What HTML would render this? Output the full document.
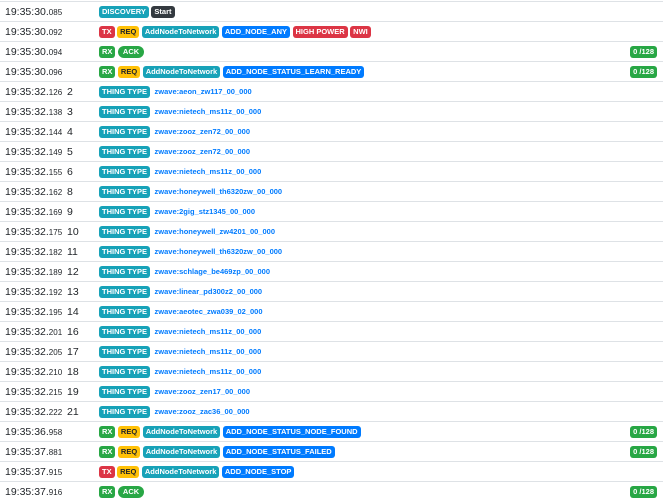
<!DOCTYPE html>
<html><head><meta charset="utf-8"><style>
body{margin:0;background:#fff;font-family:"Liberation Sans",sans-serif;color:#212529}
.row{height:19px;border-top:1px solid #dee2e6;width:663px;position:relative}
.row:first-child{margin-top:1px}
.t{position:absolute;left:5px;top:4px;font-size:10.5px;line-height:13px}
.t small{font-size:8px}
.n{position:absolute;left:67px;top:4px;font-size:10.5px;line-height:13px}
.m{position:absolute;left:99px;top:4px;display:flex;align-items:center;line-height:12px}
.b{display:inline-block;font-size:7.5px;font-weight:bold;color:#fff;padding:0 3px;border-radius:3px;line-height:12px;height:12px;margin-right:2.5px}
.g{background:#28a745}.y{background:#ffc107;color:#212529}.c{background:#17a2b8}.p{background:#007bff}.r{background:#dc3545}.d{background:#343a40}
.pill{border-radius:6px;padding:0 5px}
a{color:#007bff;font-size:7.5px;font-weight:bold;text-decoration:none;margin-left:2px}
.e{position:absolute;right:6px;top:4px;display:flex;line-height:12px}
.e .b{margin:0}
</style></head><body>
<div class="row"><span class="t">19:35:30.<small>085</small></span><span class="m"><span class="b c">DISCOVERY</span><span class="b d">Start</span></span></div>
<div class="row"><span class="t">19:35:30.<small>092</small></span><span class="m"><span class="b r">TX</span><span class="b y">REQ</span><span class="b c">AddNodeToNetwork</span><span class="b p">ADD_NODE_ANY</span><span class="b r">HIGH POWER</span><span class="b r">NWI</span></span></div>
<div class="row"><span class="t">19:35:30.<small>094</small></span><span class="m"><span class="b g">RX</span><span class="b g pill">ACK</span></span><span class="e"><span class="b g">0 /128</span></span></div>
<div class="row"><span class="t">19:35:30.<small>096</small></span><span class="m"><span class="b g">RX</span><span class="b y">REQ</span><span class="b c">AddNodeToNetwork</span><span class="b p">ADD_NODE_STATUS_LEARN_READY</span></span><span class="e"><span class="b g">0 /128</span></span></div>
<div class="row"><span class="t">19:35:32.<small>126</small></span><span class="n">2</span><span class="m"><span class="b c">THING TYPE</span><a>zwave:aeon_zw117_00_000</a></span></div>
<div class="row"><span class="t">19:35:32.<small>138</small></span><span class="n">3</span><span class="m"><span class="b c">THING TYPE</span><a>zwave:nietech_ms11z_00_000</a></span></div>
<div class="row"><span class="t">19:35:32.<small>144</small></span><span class="n">4</span><span class="m"><span class="b c">THING TYPE</span><a>zwave:zooz_zen72_00_000</a></span></div>
<div class="row"><span class="t">19:35:32.<small>149</small></span><span class="n">5</span><span class="m"><span class="b c">THING TYPE</span><a>zwave:zooz_zen72_00_000</a></span></div>
<div class="row"><span class="t">19:35:32.<small>155</small></span><span class="n">6</span><span class="m"><span class="b c">THING TYPE</span><a>zwave:nietech_ms11z_00_000</a></span></div>
<div class="row"><span class="t">19:35:32.<small>162</small></span><span class="n">8</span><span class="m"><span class="b c">THING TYPE</span><a>zwave:honeywell_th6320zw_00_000</a></span></div>
<div class="row"><span class="t">19:35:32.<small>169</small></span><span class="n">9</span><span class="m"><span class="b c">THING TYPE</span><a>zwave:2gig_stz1345_00_000</a></span></div>
<div class="row"><span class="t">19:35:32.<small>175</small></span><span class="n">10</span><span class="m"><span class="b c">THING TYPE</span><a>zwave:honeywell_zw4201_00_000</a></span></div>
<div class="row"><span class="t">19:35:32.<small>182</small></span><span class="n">11</span><span class="m"><span class="b c">THING TYPE</span><a>zwave:honeywell_th6320zw_00_000</a></span></div>
<div class="row"><span class="t">19:35:32.<small>189</small></span><span class="n">12</span><span class="m"><span class="b c">THING TYPE</span><a>zwave:schlage_be469zp_00_000</a></span></div>
<div class="row"><span class="t">19:35:32.<small>192</small></span><span class="n">13</span><span class="m"><span class="b c">THING TYPE</span><a>zwave:linear_pd300z2_00_000</a></span></div>
<div class="row"><span class="t">19:35:32.<small>195</small></span><span class="n">14</span><span class="m"><span class="b c">THING TYPE</span><a>zwave:aeotec_zwa039_02_000</a></span></div>
<div class="row"><span class="t">19:35:32.<small>201</small></span><span class="n">16</span><span class="m"><span class="b c">THING TYPE</span><a>zwave:nietech_ms11z_00_000</a></span></div>
<div class="row"><span class="t">19:35:32.<small>205</small></span><span class="n">17</span><span class="m"><span class="b c">THING TYPE</span><a>zwave:nietech_ms11z_00_000</a></span></div>
<div class="row"><span class="t">19:35:32.<small>210</small></span><span class="n">18</span><span class="m"><span class="b c">THING TYPE</span><a>zwave:nietech_ms11z_00_000</a></span></div>
<div class="row"><span class="t">19:35:32.<small>215</small></span><span class="n">19</span><span class="m"><span class="b c">THING TYPE</span><a>zwave:zooz_zen17_00_000</a></span></div>
<div class="row"><span class="t">19:35:32.<small>222</small></span><span class="n">21</span><span class="m"><span class="b c">THING TYPE</span><a>zwave:zooz_zac36_00_000</a></span></div>
<div class="row"><span class="t">19:35:36.<small>958</small></span><span class="m"><span class="b g">RX</span><span class="b y">REQ</span><span class="b c">AddNodeToNetwork</span><span class="b p">ADD_NODE_STATUS_NODE_FOUND</span></span><span class="e"><span class="b g">0 /128</span></span></div>
<div class="row"><span class="t">19:35:37.<small>881</small></span><span class="m"><span class="b g">RX</span><span class="b y">REQ</span><span class="b c">AddNodeToNetwork</span><span class="b p">ADD_NODE_STATUS_FAILED</span></span><span class="e"><span class="b g">0 /128</span></span></div>
<div class="row"><span class="t">19:35:37.<small>915</small></span><span class="m"><span class="b r">TX</span><span class="b y">REQ</span><span class="b c">AddNodeToNetwork</span><span class="b p">ADD_NODE_STOP</span></span></div>
<div class="row"><span class="t">19:35:37.<small>916</small></span><span class="m"><span class="b g">RX</span><span class="b g pill">ACK</span></span><span class="e"><span class="b g">0 /128</span></span></div>
</body></html>
